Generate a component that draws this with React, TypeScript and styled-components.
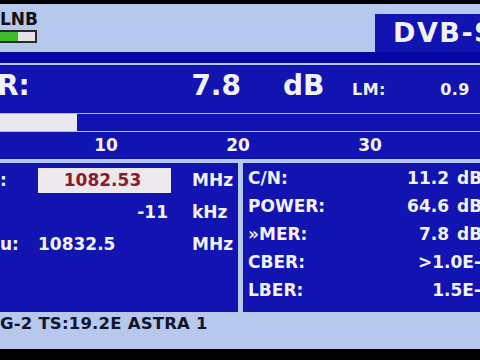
import React from "react";
import styled, { createGlobalStyle } from "styled-components";

const Global = createGlobalStyle`
  html, body { margin: 0; padding: 0; background: #000; }
  body { font-family: "DejaVu Sans", Verdana, sans-serif; }
`;

const BLUE = "#1214b2";
const LIGHT = "#b6c8ec";
const WHITE = "#f2f2fa";

const Frame = styled.div`
  width: 480px;
  height: 360px;
  background: #000;
  padding-top: 4px;
  box-sizing: border-box;
  overflow: hidden;
`;

const Screen = styled.div`
  width: 480px;
  height: 345px;
  background: ${LIGHT};
  display: flex;
  flex-direction: column;
  overflow: hidden;
  font-family: "DejaVu Sans", Verdana, sans-serif;
  font-weight: bold;
`;

const Header = styled.div`
  height: 48px;
  flex-shrink: 0;
  display: flex;
  justify-content: space-between;
  align-items: flex-end;
`;

const LnbBlock = styled.div`
  align-self: flex-start;
  padding-top: 6px;
  display: flex;
  flex-direction: column;
`;

const LnbText = styled.div`
  font-size: 17px;
  color: #111;
  line-height: 19px;
`;

const LnbBar = styled.div`
  margin-top: 1px;
  margin-left: -2px;
  width: 35px;
  height: 9px;
  border: 2px solid #2a2a2a;
  background: #e4e4e4;
  display: flex;
`;

const LnbFill = styled.div`
  width: 18px;
  height: 100%;
  background: #3cbc28;
`;

const ModeBox = styled.div`
  width: 105px;
  height: 38px;
  box-sizing: border-box;
  background: ${BLUE};
  color: ${WHITE};
  font-size: 27px;
  letter-spacing: 1.5px;
  padding: 3px 0 0 18px;
  white-space: nowrap;
  overflow: hidden;
  line-height: 31px;
`;

const DarkBand = styled.div`
  height: 11px;
  flex-shrink: 0;
  background: #0606a2;
  margin-bottom: 2px;
`;

const MainBlock = styled.div`
  height: 94px;
  flex-shrink: 0;
  background: ${BLUE};
  display: flex;
  flex-direction: column;
  margin-bottom: 4px;
`;

const ReadingRow = styled.div`
  height: 48px;
  box-sizing: border-box;
  padding-top: 4px;
  display: grid;
  grid-template-columns: 160px 81px 111px 68px 50px 1fr;
  align-items: baseline;
  color: ${WHITE};
`;

const Big = styled.span<{ $right?: boolean; $pad?: number; $shift?: number }>`
  font-size: 28px;
  text-align: ${(p) => (p.$right ? "right" : "left")};
  padding-left: ${(p) => p.$pad ?? 0}px;
  margin-left: ${(p) => p.$shift ?? 0}px;
  white-space: nowrap;
`;

const Small = styled.span<{ $right?: boolean }>`
  font-size: 16px;
  letter-spacing: 0.5px;
  text-align: ${(p) => (p.$right ? "right" : "left")};
  white-space: nowrap;
`;

const Bar = styled.div`
  height: 19px;
  box-sizing: border-box;
  border-top: 1px solid #a9b9ea;
  border-bottom: 1px solid #a9b9ea;
  background: ${BLUE};
  display: flex;
`;

const BarFill = styled.div`
  height: 100%;
  background: #e8e8f2;
`;

const Scale = styled.div`
  height: 27px;
  display: flex;
  padding-left: 40px;
  color: ${WHITE};
  font-size: 17px;
  line-height: 27px;
`;

const Tick = styled.span`
  width: 132px;
  flex-shrink: 0;
  text-align: center;
`;

const Panels = styled.div`
  height: 149px;
  flex-shrink: 0;
  display: flex;
  gap: 5px;
`;

const LeftPanel = styled.div`
  width: 238px;
  flex-shrink: 0;
  background: ${BLUE};
  padding-top: 1px;
  box-sizing: border-box;
  color: ${WHITE};
  font-size: 17px;
`;

const LeftRow = styled.div`
  height: 32px;
  display: grid;
  grid-template-columns: 38px 133px 1fr;
  align-items: center;
  white-space: nowrap;
`;

const Value = styled.span<{ $align: "left" | "right" | "center" }>`
  text-align: ${(p) => p.$align};
  padding-right: ${(p) => (p.$align === "right" ? 3 : 0)}px;
`;

const InputBox = styled.div`
  height: 25px;
  background: #ece8ec;
  color: #8c1a2c;
  display: flex;
  align-items: center;
  justify-content: center;
  padding-right: 4px;
`;

const Unit = styled.span`
  padding-left: 21px;
`;

const RightPanel = styled.div`
  width: 260px;
  flex-shrink: 0;
  background: ${BLUE};
  padding: 1px 0 0 5px;
  box-sizing: border-box;
  color: ${WHITE};
  font-size: 17px;
`;

const RightRow = styled.div`
  height: 28px;
  display: grid;
  grid-template-columns: 112px 89px 46px;
  align-items: center;
  white-space: nowrap;
`;

const RVal = styled.span<{ $wide?: boolean }>`
  text-align: right;
  grid-column: ${(p) => (p.$wide ? "2 / 4" : "auto")};
  padding-right: ${(p) => (p.$wide ? 14 : 0)}px;
`;

const RUnit = styled.span`
  padding-left: 8px;
`;

const Footer = styled.div`
  height: 37px;
  flex-shrink: 0;
  padding-top: 2px;
  box-sizing: border-box;
  color: #14142c;
  font-size: 16.5px;
  letter-spacing: 0.2px;
  white-space: nowrap;
`;

const leftRows = [
  { label: ":", value: "1082.53", unit: "MHz", kind: "input" as const },
  { label: "", value: "-11", unit: "kHz", kind: "right" as const },
  { label: "u:", value: "10832.5", unit: "MHz", kind: "left" as const },
];

const rightRows = [
  { label: "C/N:", value: "11.2", unit: "dB" },
  { label: "POWER:", value: "64.6", unit: "dB" },
  { label: "»MER:", value: "7.8", unit: "dB" },
  { label: "CBER:", value: ">1.0E-" },
  { label: "LBER:", value: "1.5E-" },
];

export default function App() {
  const mer = 7.8;
  const fill = Math.round(-26 + mer * 13.2);
  return (
    <>
      <Global />
      <Frame>
        <Screen>
          <Header>
            <LnbBlock>
              <LnbText>LNB</LnbText>
              <LnbBar>
                <LnbFill />
              </LnbBar>
            </LnbBlock>
            <ModeBox>DVB-S</ModeBox>
          </Header>
          <DarkBand />
          <MainBlock>
            <ReadingRow>
              <Big $shift={-3}>R:</Big>
              <Big $right>7.8</Big>
              <Big $pad={42}>dB</Big>
              <Small>LM:</Small>
              <Small $right>0.9</Small>
              <span />
            </ReadingRow>
            <Bar>
              <BarFill style={{ width: fill }} />
            </Bar>
            <Scale>
              <Tick>10</Tick>
              <Tick>20</Tick>
              <Tick>30</Tick>
              <Tick>40</Tick>
            </Scale>
          </MainBlock>
          <Panels>
            <LeftPanel>
              {leftRows.map((r, i) => (
                <LeftRow key={i}>
                  <span>{r.label}</span>
                  {r.kind === "input" ? (
                    <InputBox>{r.value}</InputBox>
                  ) : (
                    <Value $align={r.kind}>{r.value}</Value>
                  )}
                  <Unit>{r.unit}</Unit>
                </LeftRow>
              ))}
            </LeftPanel>
            <RightPanel>
              {rightRows.map((r, i) => (
                <RightRow key={i}>
                  <span>{r.label}</span>
                  {r.unit ? (
                    <>
                      <RVal>{r.value}</RVal>
                      <RUnit>{r.unit}</RUnit>
                    </>
                  ) : (
                    <RVal $wide>{r.value}</RVal>
                  )}
                </RightRow>
              ))}
            </RightPanel>
          </Panels>
          <Footer>G-2 TS:19.2E ASTRA 1</Footer>
        </Screen>
      </Frame>
    </>
  );
}
